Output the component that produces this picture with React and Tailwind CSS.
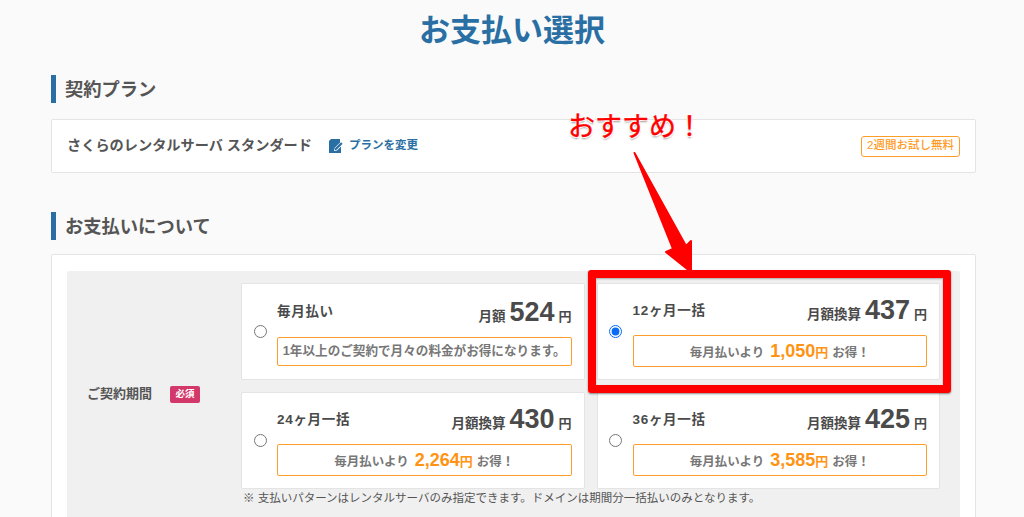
const fontStack = { fontFamily: '"Liberation Sans", "Noto Sans CJK JP", sans-serif' };

const PlanOption = ({ title, label, price, saving, message, checked, shortBox }) => {
    return (
        <label className="flex items-center h-[97px] bg-white border border-[#e4e4e4] rounded-[2px]">
            <div className="w-[35px] flex justify-center shrink-0 pl-[1px]">
                <input type="radio" name="term" defaultChecked={checked} className="w-[13px] h-[13px] m-0 accent-[#0a6cf5]" />
            </div>
            <div className="flex-1 pr-[12px]">
                <div className="flex items-center justify-between h-[31px] mb-[8px] text-[#4a4a4a] font-bold">
                    <span className="text-[13.5px] tracking-[0.7px] -mt-[1px]">{title}</span>
                    <span className="flex items-baseline -mt-[2px]">
                        <span className="text-[13.5px]">{label}</span>
                        <span className="text-[27px] leading-[31px] ml-[4px] mr-[4px]">{price}</span>
                        <span className="text-[13px]">円</span>
                    </span>
                </div>
                <div className={`flex items-center justify-center border border-[#ff9d2a] rounded-[2px] font-bold text-[#777] ${shortBox ? 'h-[29px]' : 'h-[32px]'}`}>
                    {message ? (
                        <span className="text-[12.6px]">{message}</span>
                    ) : (
                        <span className="flex items-baseline text-[12.5px]">
                            毎月払いより
                            <span className="ml-[6px] text-[18px] text-[#ff9414]">{saving}</span>
                            <span className="mr-[4px] text-[13px] text-[#ff9414]">円</span>
                            お得！
                        </span>
                    )}
                </div>
            </div>
        </label>
    );
};

const SectionHeading = ({ children }) => (
    <h2 className="h-[28px] flex items-center border-l-[5px] border-[#2a6fa3] pl-[9px] pt-[2px] text-[18.3px] leading-none font-bold text-[#555]">
        {children}
    </h2>
);

const App = () => {
    return (
        <div className="relative h-[517px] overflow-hidden bg-[#fafafa]" style={fontStack}>
            <h1 className="h-[60px] pt-[2px] flex items-center justify-center text-[31px] font-bold text-[#2a6fa3]">お支払い選択</h1>

            <main className="mx-[51px] w-[925px] pt-[15px]">
                <SectionHeading>契約プラン</SectionHeading>
                <section className="mt-[16px] h-[54px] flex items-center justify-between bg-white border border-[#e4e4e4] rounded-[2px] pl-[15px] pr-[15px]">
                    <div className="flex items-center">
                        <span className="text-[14.2px] font-bold text-[#555]">さくらのレンタルサーバ スタンダード</span>
                        <a className="ml-[16px] flex items-center text-[11.5px] font-bold text-[#2a6fa3]">
                            <svg width="15" height="16" viewBox="0 0 15 16" className="mr-[6px]">
                                <path fill="#2a6fa3" d="M3 1h9v3.5L6.5 10 6 13l3-.6 4-4V15H1V3z" />
                                <path fill="#2a6fa3" d="M7 10.2l6-6 1.6 1.6-6 6-2 .4z" />
                            </svg>
                            プランを変更
                        </a>
                    </div>
                    <span className="h-[21px] w-[99px] flex items-center justify-center border border-[#ff9d2a] rounded-[3px] text-[11.5px] font-medium text-[#ff9a24]">2週間お試し無料</span>
                </section>

                <div className="mt-[39px]">
                    <SectionHeading>お支払いについて</SectionHeading>
                </div>
                <section className="mt-[14px] h-[300px] bg-white border border-[#e4e4e4] rounded-[2px] pt-[16px] px-[15px]">
                    <div className="flex bg-[#f0f0f0] rounded-[2px] h-[280px] pt-[12px] pr-[20px]">
                        <div className="w-[174px] h-[222px] flex items-center pl-[20px]">
                            <span className="text-[13px] font-bold text-[#555]">ご契約期間</span>
                            <span className="ml-[18px] w-[30px] h-[17px] flex items-center justify-center bg-[#d2386a] rounded-[2px] text-[9.5px] font-bold text-white">必須</span>
                        </div>
                        <div className="flex-1">
                            <div className="grid grid-cols-2 gap-x-[12px] gap-y-[12px]">
                                <PlanOption title="毎月払い" label="月額" price="524" message="1年以上のご契約で月々の料金がお得になります。" shortBox />
                                <PlanOption title="12ヶ月一括" label="月額換算" price="437" saving="1,050" checked />
                                <PlanOption title="24ヶ月一括" label="月額換算" price="430" saving="2,264" />
                                <PlanOption title="36ヶ月一括" label="月額換算" price="425" saving="3,585" />
                            </div>
                            <p className="mt-[1px] pl-[2px] text-[11.5px] leading-[16px] text-[#555]">※ 支払いパターンはレンタルサーバのみ指定できます。ドメインは期間分一括払いのみとなります。</p>
                        </div>
                    </div>
                </section>
            </main>

            {/* Annotation drawn over the page */}
            <div className="absolute left-[588px] top-[270px] w-[363px] h-[123px] border-[8px] border-[#ff0000] rounded-[3px] shadow-[0_1px_2px_rgba(0,0,0,0.45),inset_0_1px_2px_rgba(0,0,0,0.3)]" />
            <svg className="absolute left-[625px] top-[145px]" width="80" height="135" viewBox="625 145 80 135">
                <path fill="#ff0000" stroke="#ff0000" strokeWidth="2" strokeLinejoin="round" d="M634.500 153L686 246 691 241 691 272 666 252 673 249Z" />
            </svg>
            <span className="absolute left-[568px] top-[107px] text-[27px] leading-[40px] text-[#ff0000] [-webkit-text-stroke:0.4px_#ff0000] [text-shadow:1px_1px_0_#fff,-1px_-1px_0_#fff,1px_-1px_0_#fff,-1px_1px_0_#fff,0_2px_2px_rgba(0,0,0,0.4)]">おすすめ！</span>
        </div>
    );
};

export default App;
